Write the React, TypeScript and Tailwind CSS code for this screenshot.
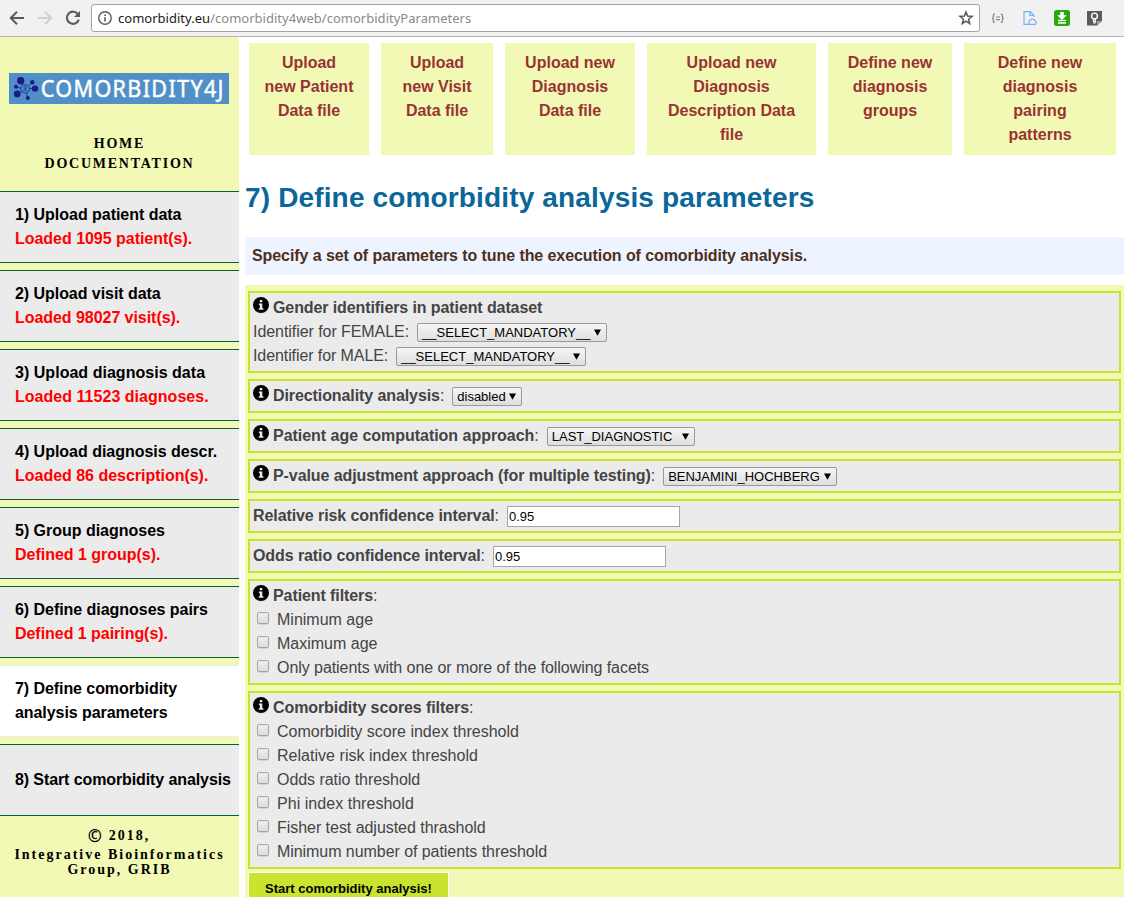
import React from "react";

const steps = [
  { title: "1) Upload patient data", status: "Loaded 1095 patient(s).", tracking: "tracking-[-0.03px]" },
  { title: "2) Upload visit data", status: "Loaded 98027 visit(s).", tracking: "tracking-[-0.05px]" },
  { title: "3) Upload diagnosis data", status: "Loaded 11523 diagnoses.", tracking: "tracking-[0.03px]" },
  { title: "4) Upload diagnosis descr.", status: "Loaded 86 description(s).", tracking: "tracking-[-0.02px]" },
  { title: "5) Group diagnoses", status: "Defined 1 group(s).", tracking: "tracking-[-0.02px]" },
  { title: "6) Define diagnoses pairs", status: "Defined 1 pairing(s).", tracking: "tracking-[-0.04px]" },
  { title: "7) Define comorbidity analysis parameters", active: true, tracking: "tracking-[-0.07px]" },
  { title: "8) Start comorbidity analysis", tracking: "tracking-[-0.1px]" },
];

const shortcuts = [
  { lines: ["Upload", "new Patient", "Data file"], width: "w-[120px]" },
  { lines: ["Upload", "new Visit", "Data file"], width: "w-[112px]" },
  { lines: ["Upload new", "Diagnosis", "Data file"], width: "w-[130px]" },
  { lines: ["Upload new", "Diagnosis", "Description Data", "file"], width: "w-[169px]" },
  { lines: ["Define new", "diagnosis", "groups"], width: "w-[124px]" },
  { lines: ["Define new", "diagnosis", "pairing", "patterns"], width: "w-[152px]" },
];

function BrowserBar() {
  return (
    <header className="flex h-[37px] shrink-0 items-center border-b border-[#b4b4b4] bg-[#f2f1f2]">
      <svg width="91" height="36" viewBox="0 0 91 36" fill="none">
        <path d="M24 18H11.5M17 11.8L10.8 18L17 24.2" stroke="#5a5a5a" strokeWidth="2" />
        <path d="M38 18H50.5M45 11.8L51.2 18L45 24.2" stroke="#d0d0d0" strokeWidth="2" />
        <path d="M78.2 14.6A6.1 6.1 0 1 0 78.8 19.6" stroke="#5a5a5a" strokeWidth="2.1" />
        <path d="M80 11V17H74Z" fill="#5a5a5a" />
      </svg>
      <div className="flex h-7 w-[889px] items-center rounded-[3px] border border-[#a5a5a5] bg-white">
        <svg className="ml-[6px] shrink-0" width="14" height="14" viewBox="0 0 14 14" fill="none">
          <circle cx="7" cy="7" r="6.2" stroke="#5a5a5a" strokeWidth="1.4" />
          <path d="M7 6.2V10.6M7 3.4V5" stroke="#5a5a5a" strokeWidth="1.6" />
        </svg>
        <span className="ml-[6px] w-[840px] shrink-0 whitespace-nowrap font-['Noto_Sans',sans-serif] text-[13px] leading-5 tracking-[0.02px] text-[#8a8a8a]">
          <span className="text-[#202020]">comorbidity.eu</span>/comorbidity4web/comorbidityParameters
        </span>
        <svg className="shrink-0" width="16" height="16" viewBox="0 0 16 16" fill="none">
          <path d="M8 2L9.6 6.1L14 6.4L10.6 9.2L11.7 13.5L8 11.1L4.3 13.5L5.4 9.2L2 6.4L6.4 6.1Z" stroke="#5a5a5a" strokeWidth="1.5" />
        </svg>
      </div>
      <svg width="144" height="36" viewBox="0 0 144 36" fill="none">
        <g stroke="#858585" strokeWidth="1.2">
          <path d="M15 14.2H14.4Q13.3 14.2 13.3 15.4V17Q13.3 18.2 12 18.2Q13.3 18.2 13.3 19.4V21.2Q13.3 22.4 14.4 22.4H15" />
          <path d="M20.7 14.2H21.3Q22.4 14.2 22.4 15.4V17Q22.4 18.2 23.8 18.2Q22.4 18.2 22.4 19.4V21.2Q22.4 22.4 21.3 22.4H20.7" />
          <path d="M15.8 17H20M15.8 19.6H20" />
        </g>
        <path d="M49.5 24.3H44V11.7H50.2L53.8 15.3V17M50 11.7V15.5H53.8" stroke="#70b0ff" strokeWidth="1.2" />
        <path d="M50 24.3A2.2 2.2 0 0 1 50.4 20.2A2.7 2.7 0 0 1 55.2 20.9A1.8 1.8 0 0 1 54.8 24.3Z" stroke="#70b0ff" strokeWidth="1.2" />
        <rect x="74" y="10" width="16" height="16" rx="2.5" fill="#2aa80c" />
        <path d="M80.2 12H83.8V15.3H86.8L82 20L77.2 15.3H80.2Z" fill="white" />
        <path d="M78 20.5H86M78 23H86" stroke="white" strokeWidth="1.5" />
        <path d="M107 11H122V21L117 25.6H107Z" fill="#5b5b5b" />
        <path d="M117 25.6V21H122Z" fill="#a0a0a0" />
        <circle cx="114.5" cy="16" r="2.9" stroke="white" strokeWidth="1.4" />
        <path d="M113.5 18V21.3H115.5V18M113.3 22.9H115.7" stroke="white" strokeWidth="1.2" />
      </svg>
    </header>
  );
}

function Logo() {
  return (
    <svg className="mx-[9px] mt-9 block overflow-visible" width="220" height="31" viewBox="0 0 220 31">
      <rect width="220" height="31" fill="#5090c6" />
      <g stroke="#1c2a8c" strokeWidth="0.8" fill="none">
        <path d="M11.5 7.5L16.5 16M23 9.5L16.5 16M7 14L16.5 16M8 21.5L16.5 16M26 15.5H16.5M19 25.5L16.5 16" />
        <circle cx="16.2" cy="15.8" r="4.3" fill="#5090c6" />
        <circle cx="16.2" cy="14.6" r="1.3" />
        <path d="M13.8 18.2Q16.2 15.5 18.6 18.2" />
      </g>
      <g fill="#181c86">
        <circle cx="11.7" cy="7.7" r="3.7" />
        <circle cx="23.2" cy="9.3" r="2.2" />
        <circle cx="7" cy="13.8" r="2" />
        <circle cx="8.2" cy="20.9" r="3.4" />
        <circle cx="26" cy="15.6" r="3.2" />
        <circle cx="18.8" cy="25" r="2" />
      </g>
      <g transform="translate(31.8 24.2) scale(0.9 1)">
        <text textLength="203" lengthAdjust="spacing" fill="white" stroke="white" strokeWidth="0.5" fontSize="24" className="font-['Noto_Sans',sans-serif]">
          COMORBIDITY4J
        </text>
      </g>
    </svg>
  );
}

function Sidebar() {
  return (
    <aside className="flex w-[239px] shrink-0 flex-col bg-[#f2f9b5]">
      <Logo />
      <div className="mt-[30px] text-center font-['Liberation_Serif',serif] text-[14px] font-bold leading-5 tracking-[1.75px] text-black">
        <div>HOME</div>
        <div>DOCUMENTATION</div>
      </div>
      <nav className="mt-[17px] flex flex-col gap-[7px]">
        {steps.map((s) => (
          <a
            key={s.title}
            className={
              s.active
                ? `flex h-[72px] flex-col justify-center border-y border-[#eaeaea] bg-white pl-[15px] pr-10 font-bold leading-6 text-black ${s.tracking}`
                : `flex h-[72px] flex-col justify-center border-y border-[#006633] bg-[#ebebeb] pl-[15px] font-bold leading-6 text-black ${s.tracking}`
            }
          >
            <span>{s.title}</span>
            {s.status && <span className="text-[#ff0000]">{s.status}</span>}
          </a>
        ))}
      </nav>
      <footer className="mt-2 text-center font-['Liberation_Serif',serif] text-[14px] font-bold leading-[15px] tracking-[2px] text-black">
        <div className="flex h-[23px] items-center justify-center pr-px">
          <span className="-mt-px mr-[5px] font-['Noto_Sans',sans-serif] text-[17px] font-bold">©</span>
          <span>2018,</span>
        </div>
        <div>Integrative Bioinformatics</div>
        <div>Group, GRIB</div>
      </footer>
    </aside>
  );
}

function Info() {
  return (
    <svg className="mr-1 mt-px shrink-0" width="16" height="16" viewBox="0 0 16 16">
      <circle cx="8" cy="8" r="8" fill="black" />
      <path d="M6.8 3H9.3V5.3H6.8ZM5.8 6.4H9.3V11.2H10.4V12.8H5.8V11.2H6.8V8H5.8Z" fill="#ebebeb" />
    </svg>
  );
}

function Select({ value, width }: { value: string; width: string }) {
  return (
    <button type="button" className={`${width} mt-[3px] flex h-[19px] items-center justify-between rounded-[2px] border border-[#999] bg-linear-to-b from-[#f6f6f6] to-[#dedede] pl-1 pr-[5px] text-[13px] leading-[17px] text-black`}>
      <span>{value}</span>
      <svg className="-mt-px" width="7" height="7" viewBox="0 0 7 7">
        <path d="M0 0.5H7L3.5 6.8Z" fill="black" />
      </svg>
    </button>
  );
}

function Panel({ children }: { children: React.ReactNode }) {
  return <section className="border-2 border-[#c9e32e] bg-[#ebebeb] p-[3px]">{children}</section>;
}

function Row({ label, bold, info, colon, tracking, children }: { label: string; bold?: boolean; info?: boolean; colon?: boolean; tracking?: string; children?: React.ReactNode }) {
  return (
    <div className="flex h-6 items-start">
      {info && <Info />}
      <span className={`mr-2 whitespace-nowrap ${tracking ?? "tracking-[-0.09px]"}`}>
        <span className={bold ? "font-bold" : ""}>{label}</span>
        {colon && ":"}
      </span>
      {children}
    </div>
  );
}

function Check({ label, tracking = "" }: { label: string; tracking?: string }) {
  return (
    <label className="flex h-6 items-start">
      <input type="checkbox" className="ml-1 mr-2 mt-1 h-3 w-3 appearance-none rounded-[2px] border border-[#a4a4a4] bg-linear-to-b from-[#eeeeee] to-[#dcdcdc] shadow-[0_1px_0_#d5d5d5]" />
      <span className={tracking}>{label}</span>
    </label>
  );
}

function Field() {
  return <input defaultValue="0.95" className="mt-0.5 h-[21px] w-[173px] border border-[#a6a6a6] bg-white px-px text-[13px] text-black" />;
}

export default function App() {
  return (
    <div className="flex h-[897px] w-[1124px] flex-col overflow-hidden bg-white font-['Liberation_Sans',sans-serif] text-[16px]">
      <BrowserBar />
      <div className="flex min-h-0 flex-1">
        <Sidebar />
        <main className="flex min-w-0 flex-1 flex-col overflow-hidden pl-1.5">
          <div className="ml-1 mt-1.5 flex h-28 shrink-0 gap-3">
            {shortcuts.map((s, i) => (
              <a key={i} className={`${s.width} bg-[#f2f9b5] pt-2 text-center font-bold leading-6 text-[#993333]`}>
                {s.lines.map((l) => (
                  <span key={l} className="block">{l}</span>
                ))}
              </a>
            ))}
          </div>
          <h1 className="mt-[27px] h-8 shrink-0 whitespace-nowrap text-[28px] font-bold leading-8 tracking-[0.15px] text-[#0b6699]">
            7) Define comorbidity analysis parameters
          </h1>
          <p className="mt-[23px] h-[38px] shrink-0 bg-[#edf4ff] pl-[7px] font-bold leading-[37px] tracking-[-0.08px] text-[#4d2f1c]">
            Specify a set of parameters to tune the execution of comorbidity analysis.
          </p>
          <form className="mt-2.5 flex h-[680px] shrink-0 flex-col gap-1.5 bg-[#f2f9b5] pl-[3px] pr-[3px] pt-1.5 leading-6 text-[#444]">
            <Panel>
              <Row info bold label="Gender identifiers in patient dataset" tracking="tracking-[-0.1px]" />
              <Row label="Identifier for FEMALE" colon tracking="tracking-[-0.06px]"><Select value="__SELECT_MANDATORY__" width="w-[190px]" /></Row>
              <Row label="Identifier for MALE" colon><Select value="__SELECT_MANDATORY__" width="w-[190px]" /></Row>
            </Panel>
            <Panel>
              <Row info bold label="Directionality analysis" colon><Select value="disabled" width="w-[70px]" /></Row>
            </Panel>
            <Panel>
              <Row info bold label="Patient age computation approach" colon tracking="tracking-[-0.03px]"><Select value="LAST_DIAGNOSTIC" width="w-[148px]" /></Row>
            </Panel>
            <Panel>
              <Row info bold label="P-value adjustment approach (for multiple testing)" colon><Select value="BENJAMINI_HOCHBERG" width="w-[174px]" /></Row>
            </Panel>
            <Panel>
              <Row bold label="Relative risk confidence interval" colon><Field /></Row>
            </Panel>
            <Panel>
              <Row bold label="Odds ratio confidence interval" colon><Field /></Row>
            </Panel>
            <Panel>
              <Row info bold label="Patient filters" colon />
              <Check label="Minimum age" />
              <Check label="Maximum age" />
              <Check label="Only patients with one or more of the following facets" tracking="tracking-[-0.06px]" />
            </Panel>
            <Panel>
              <Row info bold label="Comorbidity scores filters" colon />
              <Check label="Comorbidity score index threshold" />
              <Check label="Relative risk index threshold" tracking="tracking-[0.03px]" />
              <Check label="Odds ratio threshold" tracking="tracking-[-0.05px]" />
              <Check label="Phi index threshold" tracking="tracking-[0.04px]" />
              <Check label="Fisher test adjusted thrashold" tracking="tracking-[-0.04px]" />
              <Check label="Minimum number of patients threshold" tracking="tracking-[-0.06px]" />
            </Panel>
            <button type="button" className="-mt-[3px] h-[33px] w-[201px] border border-white bg-[#c9e32e] text-[13px] font-bold leading-5 text-black">
              Start comorbidity analysis!
            </button>
          </form>
        </main>
      </div>
    </div>
  );
}
